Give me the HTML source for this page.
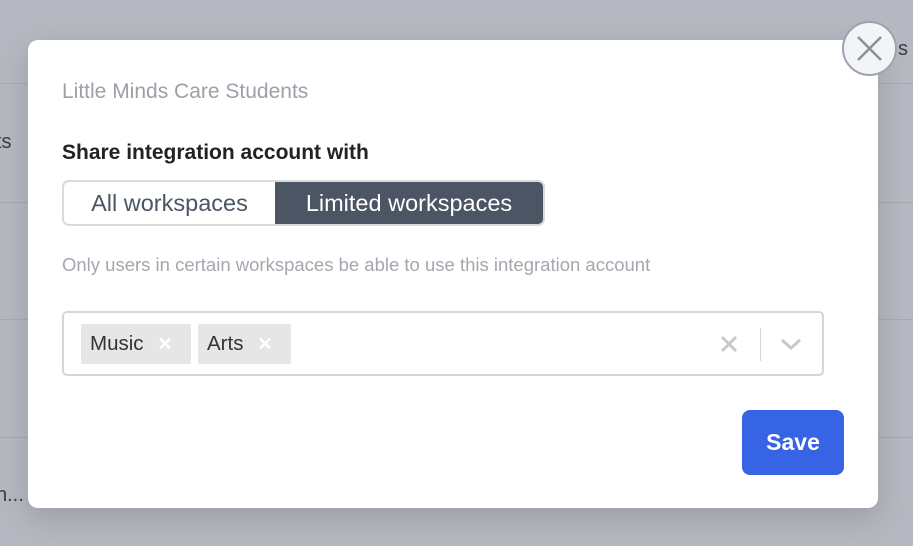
<!DOCTYPE html>
<html><head><style>
body{margin:0;width:913px;height:546px;background:#b5b8c0;position:relative;overflow:hidden;font-family:"Liberation Sans",Arial,sans-serif;}
.line{position:absolute;left:0;width:913px;height:1px;background:#a6a9b1;}
.bgt{position:absolute;color:#3a3d44;font-size:20px;}
.modal{position:absolute;left:28px;top:40px;width:850px;height:468px;background:#fff;border-radius:10px;box-shadow:0 10px 30px rgba(0,0,0,.15);}
.close{position:absolute;left:842px;top:21px;width:55px;height:55px;border-radius:50%;background:#f3f4f6;border:2px solid #9ca3af;box-sizing:border-box;}
.t1{position:absolute;left:34px;top:40px;font-size:21px;color:#9ca0a8;}
.t2{position:absolute;left:34px;top:101px;font-size:21px;font-weight:bold;color:#222;}
.seg{position:absolute;left:34px;top:140px;width:483px;height:46px;border:2px solid #d7dae0;border-radius:7px;box-sizing:border-box;overflow:hidden;display:flex;font-size:23.5px;}
.seg div{display:flex;align-items:center;justify-content:center;}
.a{width:211px;color:#4b5563;}
.b{flex:1;background:#4b5563;color:#fff;}
.t3{position:absolute;left:34px;top:214px;font-size:18.5px;color:#a3a7ae;}
.sel{position:absolute;left:34px;top:271px;width:762px;height:65px;border:2px solid #d3d6dc;border-radius:5px;box-sizing:border-box;}
.tag{position:absolute;top:11px;height:40px;background:#e6e6e6;border-radius:2px;font-size:20.5px;color:#333;display:flex;align-items:center;padding-left:9px;box-sizing:border-box;}
.tag span{color:#fff;margin-left:14px;font-size:18px;font-weight:bold;}
.save{position:absolute;left:714px;top:370px;width:102px;height:65px;background:#3763e5;border-radius:8px;color:#fff;font-weight:bold;font-size:23px;display:flex;align-items:center;justify-content:center;}
</style></head><body>
<div class="line" style="top:83px"></div>
<div class="line" style="top:202px"></div>
<div class="line" style="top:319px"></div>
<div class="line" style="top:437px"></div>
<div class="bgt" style="left:-4px;top:131px">ts</div>
<div class="bgt" style="left:-4px;top:484px">n...</div>
<div class="bgt" style="left:898px;top:38px">s</div>
<div class="modal">
<div class="t1">Little Minds Care Students</div>
<div class="t2">Share integration account with</div>
<div class="seg"><div class="a">All workspaces</div><div class="b">Limited workspaces</div></div>
<div class="t3">Only users in certain workspaces be able to use this integration account</div>
<div class="sel">
<div class="tag" style="left:17px;width:110px">Music<span>✕</span></div>
<div class="tag" style="left:134px;width:93px">Arts<span>✕</span></div>
<svg style="position:absolute;left:656px;top:22px" width="18" height="18"><path d="M2 2L16 16M16 2L2 16" stroke="#c8c8c8" stroke-width="3"/></svg>
<div style="position:absolute;left:696px;top:15px;width:1px;height:33px;background:#d6d6d6"></div>
<svg style="position:absolute;left:716px;top:24px" width="22" height="14"><path d="M2 3L11 11L20 3" stroke="#c8c8c8" stroke-width="3" fill="none"/></svg>
</div>
<div class="save">Save</div>
</div>
<div class="close"><svg width="51" height="51" style="position:absolute;left:0;top:0"><path d="M14 14L37 37M37 14L14 37" stroke="#8a9099" stroke-width="2.5"/></svg></div>
</body></html>
